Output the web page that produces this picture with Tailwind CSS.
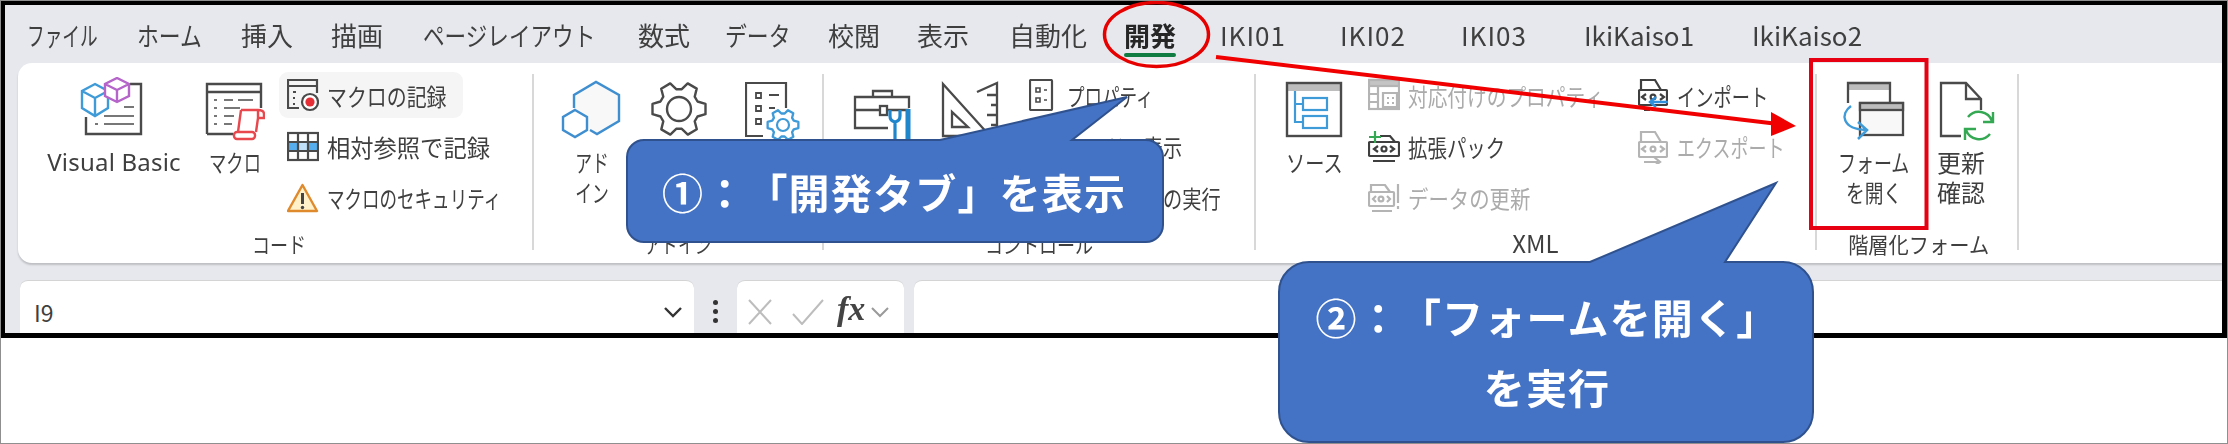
<!DOCTYPE html>
<html lang="ja">
<head>
<meta charset="utf-8">
<script src="https://cdn.jsdelivr.net/npm/@tailwindcss/browser@4"></script>
<title>開発タブ</title>
</head>
<body class="bg-white">
<div class="relative w-[2228px] h-[444px] overflow-hidden bg-white border border-[#8f8f8f] font-['Noto_Sans_CJK_JP',sans-serif] text-[#3f3f3f]">

  <!-- Excel window -->
  <div class="-ml-px -mt-px w-[2227px] h-[338px] border-[5px] border-black bg-[#e6e8ed] flex flex-col overflow-hidden">

    <!-- tabs -->
    <div class="h-[58px] shrink-0 flex items-center pt-[2px] text-[26px] leading-[30px] blur-[0.5px]">
      <div class="ml-[22px] w-[68px]"><span class="block whitespace-nowrap origin-left scale-x-[.68]">ファイル</span></div>
      <div class="ml-[42px] w-[66px]"><span class="block whitespace-nowrap origin-left scale-x-[.84]">ホーム</span></div>
      <div class="ml-[38px] w-[52px]"><span class="block whitespace-nowrap">挿入</span></div>
      <div class="ml-[38px] w-[50px]"><span class="block whitespace-nowrap">描画</span></div>
      <div class="ml-[42px] w-[172px]"><span class="block whitespace-nowrap origin-left scale-x-[.83]">ページレイアウト</span></div>
      <div class="ml-[43px] w-[50px]"><span class="block whitespace-nowrap">数式</span></div>
      <div class="ml-[37px] w-[65px]"><span class="block whitespace-nowrap origin-left scale-x-[.84]">データ</span></div>
      <div class="ml-[38px] w-[51px]"><span class="block whitespace-nowrap">校閲</span></div>
      <div class="ml-[38px] w-[52px]"><span class="block whitespace-nowrap">表示</span></div>
      <div class="ml-[40px] w-[75px]"><span class="block whitespace-nowrap">自動化</span></div>
      <div class="ml-[40px] w-[52px] relative font-bold text-[#262626]"><span class="block whitespace-nowrap">開発</span><span class="absolute left-0 right-0 top-[33px] h-[4px] rounded-full bg-[#107c41]"></span></div>
      <div class="ml-[44px] w-[66px]"><span class="block whitespace-nowrap tracking-[1px]">IKI01</span></div>
      <div class="ml-[54px] w-[69px]"><span class="block whitespace-nowrap tracking-[1px]">IKI02</span></div>
      <div class="ml-[52px] w-[69px]"><span class="block whitespace-nowrap tracking-[1px]">IKI03</span></div>
      <div class="ml-[54px] w-[112px]"><span class="block whitespace-nowrap">IkiKaiso1</span></div>
      <div class="ml-[56px] w-[112px]"><span class="block whitespace-nowrap">IkiKaiso2</span></div>
    </div>

    <!-- ribbon -->
    <div class="h-[200px] shrink-0 ml-[13px] bg-white rounded-l-[14px] flex shadow-[0_2px_2px_rgba(0,0,0,0.18)] blur-[0.5px] text-[24px] leading-[30px]">

      <!-- コード -->
      <div class="w-[514px] shrink-0 flex flex-col">
        <div class="h-[163px] flex pl-[28px]">
          <div class="w-[136px] pt-[14px] flex flex-col items-center">
            <svg viewBox="46 77 136 70" class="w-[136px] h-[70px] shrink-0" fill="none" stroke="#4a4a4a" stroke-width="2.4">
              <path d="M130 84H141V134H86V117"/>
              <path d="M124 107H134M104 116H134M95 124H98M104 124H134" stroke-width="2" stroke="#777"/>
              <path d="M95 84L108 91V108L95 116L82 108V91ZM82 91L95 98L108 91M95 98V116" stroke="#3f9bd8" fill="#fff"/>
              <path d="M117 78L129 84V96L117 102L105 96V84ZM105 84L117 90L129 84M117 90V102" stroke="#b565c9" fill="#fff"/>
            </svg>
            <span class="whitespace-nowrap font-['Noto_Sans',sans-serif] text-[24px] tracking-[.2px]">Visual Basic</span>
          </div>
          <div class="ml-[23px] w-[60px] pt-[14px] flex flex-col items-center">
            <svg viewBox="205 77 60 70" class="w-[60px] h-[70px] shrink-0" fill="none" stroke="#4a4a4a" stroke-width="2.4">
              <path d="M207 134V84H261V108M207 92H261M207 134H233"/>
              <path d="M214 100H217M224 100H233M238 100H253M214 108H217M224 108H240M214 116H217M224 116H234M214 124H217M224 124H232" stroke="#777" stroke-width="2"/>
              <path d="M241 110H258Q264 110 264 114V118H258V110M258 118L256 132M241 110L238 132" stroke="#e8484d" fill="#f8f8f8"/>
              <rect x="234" y="132" width="21" height="7" rx="3" stroke="#e8484d" fill="#fff"/>
            </svg>
            <span class="whitespace-nowrap origin-center scale-x-[.72]">マクロ</span>
          </div>
          <div class="ml-[14px] w-[230px] pt-[9px] flex flex-col">
            <div class="h-[46px] w-[184px] rounded-[9px] bg-[#f5f5f5] flex items-center pl-[8px] gap-[8px]">
              <svg viewBox="287 78 32 34" class="w-[32px] h-[34px] shrink-0" fill="none" stroke="#4a4a4a" stroke-width="2.2">
                <path d="M299 108H288V80H317V93M288 86H317"/>
                <path d="M293 92H296M293 98H295M293 104H295" stroke-width="1.8"/>
                <circle cx="310" cy="102" r="8" fill="#fff"/><circle cx="310" cy="102" r="4.6" fill="#e62e36" stroke="none"/>
              </svg>
              <span class="whitespace-nowrap origin-left scale-x-[.83] pt-[2px]">マクロの記録</span>
            </div>
            <div class="h-[50px] mt-[4px] flex items-center pl-[8px] gap-[8px]">
              <svg viewBox="287 131 32 32" class="w-[32px] h-[32px] shrink-0" fill="none" stroke="#4a4a4a" stroke-width="2.2">
                <rect x="288" y="142" width="30" height="9" fill="#56aeee" stroke="none"/>
                <rect x="298" y="142" width="10" height="9" fill="#bfe0f8" stroke="none"/>
                <rect x="288" y="133" width="30" height="27"/><path d="M298 133V160M308 133V160M288 142H318M288 151H318"/>
              </svg>
              <span class="whitespace-nowrap origin-left scale-x-[.97]">相対参照で記録</span>
            </div>
            <div class="h-[52px] flex items-center pl-[8px] gap-[8px]">
              <svg viewBox="287 182 32 32" class="w-[32px] h-[32px] shrink-0">
                <path d="M302.500 185L317 211H288Z" fill="#fff1c9" stroke="#e08a2e" stroke-width="2.400" stroke-linejoin="round"/>
                <path d="M302.500 193V204" stroke="#444" stroke-width="3"/><circle cx="302.500" cy="207.500" r="1.700" fill="#444"/>
              </svg>
              <span class="whitespace-nowrap origin-left scale-x-[.73]">マクロのセキュリティ</span>
            </div>
          </div>
        </div>
        <div class="h-[34px] flex items-center justify-center pl-[8px] text-[22px]"><span class="whitespace-nowrap scale-x-[.82]">コード</span></div>
      </div>
      <div class="w-[2px] h-[176px] mt-[11px] shrink-0 bg-[#d8d8d8]"></div>

      <!-- アドイン -->
      <div class="w-[288px] shrink-0 flex flex-col">
        <div class="h-[163px] flex pl-[26px]">
          <div class="w-[64px] pt-[14px] flex flex-col items-center">
            <svg viewBox="560 77 64 70" class="w-[64px] h-[70px] shrink-0" fill="none" stroke="#3f8fd0" stroke-width="2.400">
              <path d="M574 108L574 95L596 82L619 95V121L597 134L590 130" fill="#f8f8f8"/>
              <path d="M575 110L587 117V130L575 137L563 130V117Z" fill="#fff"/>
            </svg>
            <span class="whitespace-nowrap scale-x-[.7]">アド</span>
            <span class="whitespace-nowrap scale-x-[.7]">イン</span>
          </div>
          <div class="ml-[21px] w-[68px] pt-[14px]">
            <svg viewBox="645 77 68 70" class="w-[68px] h-[70px]" fill="none" stroke="#4a4a4a" stroke-width="2.400" stroke-linejoin="round">
              <polygon transform="translate(679 109)" points="18.5,-7.5 26.5,-5.2 26.5,5.2 18.5,7.5 15.7,12.3 17.8,20.3 8.8,25.6 2.800,19.8 -2.8,19.8 -8.7,25.6 -17.7,20.4 -15.7,12.3 -18.5,7.5 -26.5,5.2 -26.5,-5.2 -18.5,-7.5 -15.7,-12.3 -17.8,-20.3 -8.8,-25.6 -2.8,-19.8 2.8,-19.8 8.7,-25.6 17.7,-20.4 15.7,-12.3"/>
              <circle cx="679" cy="109" r="12"/>
            </svg>
          </div>
          <div class="ml-[32px] w-[56px] pt-[14px]">
            <svg viewBox="745 77 56 70" class="w-[56px] h-[70px]" fill="none" stroke="#4a4a4a" stroke-width="2.200">
              <path d="M763 136H746V83H786V108"/>
              <path d="M756 93H761V98H756ZM756 106H761V111H756ZM756 119H761V124H756Z" stroke-width="1.800"/>
              <path d="M769 95H779M769 108H775" stroke-width="2"/>
              <polygon transform="translate(783 125) scale(.58)" fill="#fff" stroke="#3f9bd8" stroke-width="4" stroke-linejoin="round" points="18.5,-7.5 26.5,-5.2 26.5,5.2 18.5,7.5 15.7,12.3 17.8,20.3 8.8,25.6 2.800,19.8 -2.8,19.8 -8.7,25.6 -17.7,20.4 -15.7,12.3 -18.5,7.5 -26.5,5.2 -26.5,-5.2 -18.5,-7.5 -15.7,-12.3 -17.8,-20.3 -8.8,-25.6 -2.8,-19.8 2.8,-19.8 8.7,-25.6 17.7,-20.4 15.7,-12.3"/>
              <circle cx="783" cy="125" r="6" stroke="#3f9bd8"/>
            </svg>
          </div>
        </div>
        <div class="h-[34px] flex items-center justify-center text-[22px]"><span class="whitespace-nowrap scale-x-[.76]">アドイン</span></div>
      </div>
      <div class="w-[2px] h-[176px] mt-[11px] shrink-0 bg-[#d8d8d8]"></div>

      <!-- コントロール -->
      <div class="w-[430px] shrink-0 flex flex-col">
        <div class="h-[163px] flex pl-[26px]">
          <div class="w-[66px] pt-[14px]">
            <svg viewBox="850 77 66 70" class="w-[66px] h-[70px]" fill="none" stroke="#4a4a4a" stroke-width="2.300">
              <path d="M888 128H855V97H909V108M855 110H880M886 110H909M873 97V91H892V97"/>
              <rect x="880" y="106" width="7" height="9" fill="#fff"/>
              <path d="M890 110V116Q890 121 895 122V140M900 110V116Q900 121 895 122" stroke="#1f86cc" stroke-width="3.200"/>
              <path d="M908 109V124M908 124V140" stroke="#1f86cc" stroke-width="5"/>
            </svg>
          </div>
          <div class="ml-[24px] w-[60px] pt-[14px]">
            <svg viewBox="940 77 60 70" class="w-[60px] h-[70px]" fill="none" stroke="#4a4a4a" stroke-width="2.300">
              <path d="M943 84V136H990ZM952 112V127H968Z"/>
              <path d="M977 92L997 83V136M997 95H987M997 105H991M997 115H987M997 125H991"/>
            </svg>
          </div>
          <div class="ml-[21px] w-[230px] pt-[9px] flex flex-col">
            <div class="h-[46px] flex items-center pl-[8px] gap-[6px]">
              <svg viewBox="1029 79 32 32" class="w-[32px] h-[32px] shrink-0" fill="none" stroke="#4a4a4a" stroke-width="2.200">
                <rect x="1030" y="80" width="22" height="30" rx="1"/>
                <path d="M1036 88H1040V92H1036ZM1036 98H1040V102H1036ZM1044 90H1047M1044 100H1047" stroke-width="1.600"/>
              </svg>
              <span class="whitespace-nowrap origin-left scale-x-[.73] pt-[2px]">プロパティ</span>
            </div>
            <div class="h-[50px] mt-[4px] flex items-center pl-[46px]"><span class="whitespace-nowrap origin-left scale-x-[.8]">コードの表示</span></div>
            <div class="h-[52px] flex items-center pl-[46px]"><span class="whitespace-nowrap origin-left scale-x-[.8]">ダイアログの実行</span></div>
          </div>
        </div>
        <div class="h-[34px] flex items-center justify-center text-[22px]"><span class="whitespace-nowrap scale-x-[.82]">コントロール</span></div>
      </div>
      <div class="w-[2px] h-[176px] mt-[11px] shrink-0 bg-[#d8d8d8]"></div>

      <!-- XML -->
      <div class="w-[559px] shrink-0 flex flex-col">
        <div class="h-[163px] flex pl-[28px]">
          <div class="w-[60px] pt-[14px] flex flex-col items-center">
            <svg viewBox="1284 77 60 70" class="w-[60px] h-[70px] shrink-0" fill="none" stroke="#4a4a4a" stroke-width="2.400">
              <rect x="1287" y="83" width="54" height="8" fill="#bdbdbd" stroke="none"/>
              <rect x="1287" y="83" width="54" height="53"/>
              <path d="M1295 91V122H1303M1295 104H1303" stroke="#3f9bd8" stroke-width="2.200"/>
              <rect x="1303" y="98" width="24" height="12" stroke="#3f9bd8" stroke-width="2.200"/>
              <rect x="1303" y="116" width="24" height="12" stroke="#3f9bd8" stroke-width="2.200"/>
            </svg>
            <span class="whitespace-nowrap scale-x-[.8]">ソース</span>
          </div>
          <div class="ml-[16px] w-[270px] pt-[9px] flex flex-col">
            <div class="h-[46px] flex items-center pl-[8px] gap-[8px] text-[#ababab]">
              <svg viewBox="1368 79 32 34" class="w-[32px] h-[34px] shrink-0" fill="none" stroke="#b4b4b4" stroke-width="2.200">
                <rect x="1369" y="81" width="30" height="29"/><rect x="1369" y="81" width="30" height="6" fill="#c4c4c4"/>
                <path d="M1378 87V110M1369 95H1378M1369 103H1378M1383 94H1397V108H1383ZM1387 99H1389M1392 99H1394M1387 104H1389M1392 104H1394"/>
              </svg>
              <span class="whitespace-nowrap origin-left scale-x-[.82] pt-[2px]">対応付けのプロパティ</span>
            </div>
            <div class="h-[50px] mt-[4px] flex items-center pl-[8px] gap-[8px]">
              <svg viewBox="1368 130 32 34" class="w-[32px] h-[34px] shrink-0" fill="none" stroke="#3f3f3f" stroke-width="2.200">
                <path d="M1380 136H1390L1395 142"/>
                <rect x="1369" y="142" width="30" height="14" rx="1"/>
                <path d="M1378 146L1374 149L1378 152M1390 146L1394 149L1390 152M1373 161H1395"/><circle cx="1384" cy="149" r="2.500"/>
                <path d="M1375 131V143M1369 137H1381" stroke="#35a853"/>
              </svg>
              <span class="whitespace-nowrap origin-left scale-x-[.81]">拡張パック</span>
            </div>
            <div class="h-[52px] flex items-center pl-[8px] gap-[8px] text-[#ababab]">
              <svg viewBox="1368 181 32 34" class="w-[32px] h-[34px] shrink-0" fill="none" stroke="#b4b4b4" stroke-width="2.200">
                <path d="M1371 192V185H1385L1390 192"/>
                <rect x="1369" y="192" width="25" height="14" rx="1"/>
                <path d="M1376 196L1373 199L1376 202M1387 196L1390 199L1387 202M1372 211H1392M1398 184V203M1398 206V209"/><circle cx="1381" cy="199" r="2.400"/>
              </svg>
              <span class="whitespace-nowrap origin-left scale-x-[.85]">データの更新</span>
            </div>
          </div>
          <div class="w-[170px] pt-[9px] flex flex-col">
            <div class="h-[46px] flex items-center pl-[8px] gap-[9px]">
              <svg viewBox="1638 79 30 34" class="w-[30px] h-[34px] shrink-0" fill="none" stroke="#3f3f3f" stroke-width="2.200">
                <path d="M1641 91V81H1655L1661 91"/>
                <rect x="1639" y="91" width="28" height="15" rx="1"/>
                <path d="M1646 95L1642 98L1646 101M1660 95L1664 98L1660 101M1644 111H1650"/><circle cx="1653" cy="98" r="2.400"/>
                <path d="M1668 103H1650M1656 98L1650 103L1656 108" stroke="#2e8fdc" stroke-width="2.400"/>
              </svg>
              <span class="whitespace-nowrap origin-left scale-x-[.76] pt-[2px]">インポート</span>
            </div>
            <div class="h-[50px] mt-[4px] flex items-center pl-[8px] gap-[9px] text-[#ababab]">
              <svg viewBox="1638 130 30 34" class="w-[30px] h-[34px] shrink-0" fill="none" stroke="#b4b4b4" stroke-width="2.200">
                <path d="M1641 142V132H1655L1661 142"/>
                <rect x="1639" y="142" width="28" height="15" rx="1"/>
                <path d="M1646 146L1642 149L1646 152M1660 146L1664 149L1660 152M1644 162H1658M1654 157L1660 162L1654 166"/><circle cx="1653" cy="149" r="2.400"/>
              </svg>
              <span class="whitespace-nowrap origin-left scale-x-[.75]">エクスポート</span>
            </div>
          </div>
        </div>
        <div class="h-[34px] flex items-center justify-center text-[24px]"><span class="whitespace-nowrap">XML</span></div>
      </div>
      <div class="w-[2px] h-[176px] mt-[11px] shrink-0 bg-[#d8d8d8]"></div>

      <!-- 階層化フォーム -->
      <div class="w-[200px] shrink-0 flex flex-col">
        <div class="h-[163px] flex pl-[21px]">
          <div class="w-[72px] pt-[14px] flex flex-col items-center">
            <svg viewBox="1838 77 72 70" class="w-[72px] h-[70px] shrink-0" fill="none" stroke="#4a4a4a" stroke-width="2.300">
              <rect x="1848" y="83" width="43" height="7" fill="#bdbdbd" stroke="none"/>
              <path d="M1848 103V83H1890V102"/>
              <rect x="1860" y="103" width="43" height="32" fill="#f8f8f8"/>
              <rect x="1860" y="103" width="43" height="7" fill="#bdbdbd"/>
              <path d="M1851 106C1840 114 1842 129 1866 130M1858 122L1867 130L1858 139" stroke="#3f9bd8" stroke-width="2.500"/>
            </svg>
            <span class="whitespace-nowrap scale-x-[.75]">フォーム</span>
            <span class="whitespace-nowrap scale-x-[.78]">を開く</span>
          </div>
          <div class="ml-[24px] w-[64px] pt-[14px] flex flex-col items-center">
            <svg viewBox="1934 77 64 70" class="w-[64px] h-[70px] shrink-0" fill="none" stroke="#4a4a4a" stroke-width="2.300">
              <path d="M1961 136H1941V83H1966L1981 99V110M1966 83V99H1981"/>
              <path d="M1968 117A14 14 0 0 1 1992 121M1993 112V122H1983M1990 134A14 14 0 0 1 1966 130M1965 140V129H1976" stroke="#35a853" stroke-width="2.400"/>
            </svg>
            <span class="whitespace-nowrap -ml-[10px]">更新</span>
            <span class="whitespace-nowrap -ml-[10px]">確認</span>
          </div>
        </div>
        <div class="h-[34px] flex items-center justify-center pl-[4px] text-[22px]"><span class="whitespace-nowrap scale-x-[.92]">階層化フォーム</span></div>
      </div>
      <div class="w-[2px] h-[176px] mt-[11px] shrink-0 bg-[#d8d8d8]"></div>
    </div>

    <!-- formula bar -->
    <div class="h-[17px] shrink-0"></div>
    <div class="flex-1 flex pl-[15px] blur-[0.4px]">
      <div class="w-[674px] bg-white rounded-t-[8px] border-t border-[#d4d4d4] flex items-center justify-between pl-[14px] pr-[12px] text-[23px] pt-[10px]">
        <span class="leading-none">I9</span>
        <svg viewBox="0 0 18 12" class="w-[18px] h-[12px]" fill="none" stroke="#333" stroke-width="2.400"><path d="M1 2L9 10L17 2"/></svg>
      </div>
      <div class="w-[43px] flex flex-col items-center justify-center gap-[4px] pt-[10px]">
        <span class="w-[5px] h-[5px] rounded-full bg-[#333]"></span><span class="w-[5px] h-[5px] rounded-full bg-[#333]"></span><span class="w-[5px] h-[5px] rounded-full bg-[#333]"></span>
      </div>
      <div class="w-[167px] bg-white rounded-t-[8px] border-t border-[#d4d4d4] flex items-center pl-[11px] pt-[10px]">
        <svg viewBox="0 0 24 26" class="w-[24px] h-[26px] shrink-0" fill="none" stroke="#bdbdbd" stroke-width="2"><path d="M1 1L23 25M23 1L1 25"/></svg>
        <svg viewBox="0 0 34 26" class="w-[34px] h-[26px] ml-[19px] shrink-0" fill="none" stroke="#bdbdbd" stroke-width="2"><path d="M2 15L11 25L32 1"/></svg>
        <span class="ml-[12px] font-['Liberation_Serif',serif] italic font-bold text-[34px] leading-none text-[#444] -mt-[6px]">fx</span>
        <svg viewBox="0 0 18 12" class="w-[18px] h-[12px] ml-[6px] shrink-0" fill="none" stroke="#9a9a9a" stroke-width="2"><path d="M1 2L9 10L17 2"/></svg>
      </div>
      <div class="ml-[10px] flex-1 bg-white rounded-tl-[8px] border-t border-[#d4d4d4]"></div>
    </div>
  </div>

  <!-- annotations -->
  <svg viewBox="0 0 2228 444" class="absolute left-[-1px] top-[-1px] w-[2228px] h-[444px]" fill="none">
    <ellipse cx="1156.500" cy="34.500" rx="52" ry="32" stroke="#e60000" stroke-width="3.500"/>
    <path d="M1216 57L1774 123.500" stroke="#f00000" stroke-width="4"/>
    <path d="M1796 126L1771 112V136Z" fill="#f00000"/>
    <rect x="1811" y="60" width="115.500" height="168" stroke="#e60012" stroke-width="4"/>
    <path d="M644 140H940L1127 97L1072 140H1146A17 17 0 0 1 1163 157V225A17 17 0 0 1 1146 242H644A17 17 0 0 1 627 225V157A17 17 0 0 1 644 140Z" fill="#4472c4" stroke="#2f528f" stroke-width="2"/>
    <path d="M1309 262H1590L1776 183L1725 262H1783A30 30 0 0 1 1813 292V412A30 30 0 0 1 1783 442H1309A30 30 0 0 1 1279 412V292A30 30 0 0 1 1309 262Z" fill="#4472c4" stroke="#2f528f" stroke-width="2"/>
  </svg>
  <div class="absolute left-[661px] top-[168px] whitespace-nowrap text-white font-bold text-[41px] leading-[44px] tracking-[1.200px] [text-spacing-trim:space-all]">①：「開発タブ」を表示</div>
  <div class="absolute left-[1279px] w-[534px] top-[280px] flex flex-col items-center text-white font-bold text-[41px] leading-[70px] tracking-[1.200px] [text-spacing-trim:space-all]">
    <span class="whitespace-nowrap">②：「フォームを開く」</span>
    <span class="whitespace-nowrap">を実行</span>
  </div>
</div>
</body>
</html>
